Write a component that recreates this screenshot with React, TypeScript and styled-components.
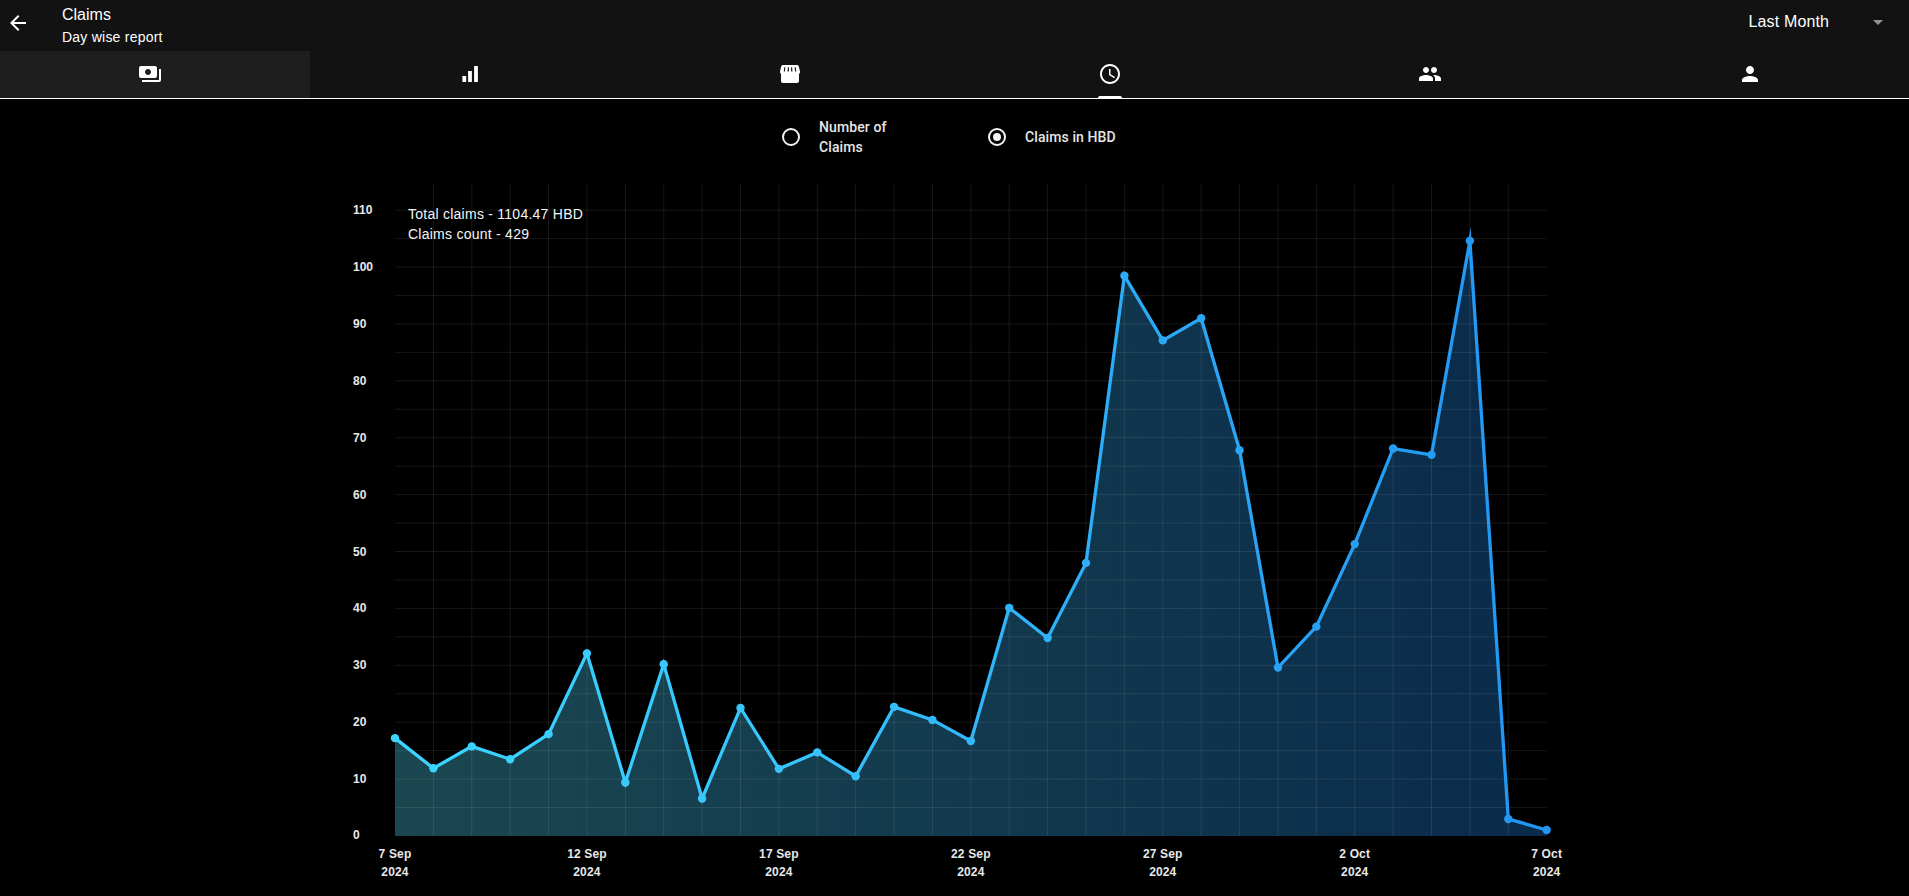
import React from "react";
import styled, { createGlobalStyle } from "styled-components";
import {
  MdArrowBack,
  MdArrowDropDown,
  MdPayments,
  MdAccessTime,
  MdPeople,
  MdPerson,
} from "react-icons/md";

const GlobalStyle = createGlobalStyle`
  html, body {
    margin: 0;
    padding: 0;
    height: 100%;
    background: #000;
    overflow: hidden;
    font-family: "Liberation Sans", Arial, sans-serif;
    color: #fff;
  }
`;

const Page = styled.div`
  width: 100%;
  height: 896px;
  background: #000;
  overflow: hidden;
`;

const Header = styled.header`
  background: #121212;
  border-bottom: 1px solid #fff;
  overflow: hidden;
`;

const TopRow = styled.div`
  display: flex;
  align-items: flex-start;
  height: 51px;
`;

const BackIcon = styled(MdArrowBack)`
  width: 24px;
  height: 24px;
  margin: 11px 32px 0 6px;
  color: #fff;
  flex: none;
`;

const Titles = styled.div`
  padding-top: 3px;
  flex: 1;
`;

const Title = styled.div`
  font-size: 16px;
  line-height: 24px;
`;

const Subtitle = styled.div`
  font-size: 14px;
  line-height: 20px;
  letter-spacing: 0.23px;
`;

const Select = styled.div`
  display: flex;
  align-items: center;
  height: 24px;
  margin: 10px 19px 0 0;
  font-size: 16px;
  letter-spacing: 0.15px;
`;

const SelectValue = styled.span`
  width: 117.5px;
`;

const SelectArrow = styled(MdArrowDropDown)`
  width: 24px;
  height: 24px;
  color: rgba(255, 255, 255, 0.54);
`;

const Tabs = styled.nav`
  display: flex;
  margin-left: -10px;
  height: 47px;
`;

const Tab = styled.div<{ $selected?: boolean }>`
  position: relative;
  flex: 0 0 320px;
  display: flex;
  justify-content: center;
  padding-top: 11px;
  box-sizing: border-box;
  color: #fff;
  background: ${(p) => (p.$selected ? "#1e1e1e" : "transparent")};
  svg {
    width: 24px;
    height: 24px;
  }
`;

const TabIndicator = styled.span`
  position: absolute;
  bottom: 0;
  left: 148px;
  width: 24px;
  height: 2px;
  background: #fff;
  border-radius: 2px 2px 0 0;
`;

const RadioRow = styled.div`
  display: flex;
  justify-content: center;
  align-items: center;
  gap: 78px;
  height: 71px;
  padding-top: 5px;
  box-sizing: border-box;
`;

const RadioItem = styled.label<{ $wide?: boolean }>`
  display: flex;
  align-items: center;
  gap: 19px;
  min-width: ${(p) => (p.$wide ? "139px" : "auto")};
`;

const RadioCircle = styled.span<{ $checked?: boolean }>`
  flex: none;
  display: flex;
  align-items: center;
  justify-content: center;
  width: 18px;
  height: 18px;
  box-sizing: border-box;
  border: 2px solid #f2f2f2;
  border-radius: 50%;
  &::after {
    content: "";
    display: ${(p) => (p.$checked ? "block" : "none")};
    width: 8px;
    height: 8px;
    border-radius: 50%;
    background: #f2f2f2;
  }
`;

const RadioLabel = styled.span<{ $narrow?: boolean }>`
  font-family: Roboto, "Liberation Sans", sans-serif;
  font-size: 14px;
  font-weight: 500;
  line-height: 20px;
  letter-spacing: 0.1px;
  color: #e6e6e6;
  width: ${(p) => (p.$narrow ? "91px" : "auto")};
`;

const ChartWrap = styled.section`
  position: relative;
  width: 1229px;
  height: 726px;
  margin: 0 auto;
`;

const ChartSvg = styled.svg`
  display: block;
  width: 1229px;
  height: 726px;
`;

const Stats = styled.div`
  position: absolute;
  left: 68px;
  top: 34px;
  font-size: 14px;
  line-height: 20px;
  letter-spacing: 0.25px;
  color: #f5f5f5;
`;

const YLabel = styled.text`
  font-family: "Liberation Sans", Arial, sans-serif;
  font-size: 12px;
  font-weight: 700;
  fill: #e8e8e8;
  dominant-baseline: central;
`;

const XLabel = styled.text`
  font-family: "Liberation Sans", Arial, sans-serif;
  font-size: 12px;
  font-weight: 700;
  letter-spacing: 0.15px;
  fill: #e8e8e8;
  text-anchor: middle;
`;

function StoreIcon() {
  return (
    <svg viewBox="0 0 24 24" fill="currentColor" fillRule="evenodd" xmlns="http://www.w3.org/2000/svg">
      <path d="M21.9 8.89l-1.05-4.37c-.22-.9-1-1.52-1.91-1.52H5.05c-.9 0-1.69.63-1.9 1.52L2.1 8.89c-.24 1.02-.02 2.06.62 2.88.08.11.19.19.28.29V19c0 1.1.9 2 2 2h14c1.1 0 2-.9 2-2v-6.94c.09-.09.2-.18.28-.28.64-.82.87-1.87.62-2.89z M6.3 5.2h1.1l-.55 4.4h-1.05z M9.9 5.2h1.05l-.1 4.4h-1.3z M13.05 5.2h1.05l.35 4.4h-1.3z M16.6 5.2h1.1l.5 4.4h-1.05z" />
    </svg>
  );
}

function BarsIcon() {
  return (
    <svg viewBox="0 0 24 24" fill="currentColor" xmlns="http://www.w3.org/2000/svg">
      <path d="M4.4 14h3.8v6H4.4z M10.1 9h3.8v11h-3.8z M16.1 4h3.8v16h-3.8z" />
    </svg>
  );
}

const values = [
  17.2, 11.9, 15.75, 13.5, 17.9, 32.1, 9.4, 30.2, 6.6, 22.5, 11.8, 14.7, 10.5, 22.7, 20.4,
  16.7, 40.1, 34.8, 48, 98.47, 87.1, 91, 67.8, 29.6, 36.8, 51.3, 68.1, 67, 104.6, 3, 1.05,
];

const X0 = 395;
const X1 = 1546.67;
const STEP = (X1 - X0) / 30;
const Y0 = 836;
const UNIT = 5.69;
const px = (i: number) => X0 + i * STEP;
const py = (v: number) => Y0 - v * UNIT;

const points = values.map((v, i) => [px(i), py(v)] as const);
const linePath = points.map(([x, y], i) => `${i ? "L" : "M"}${x.toFixed(2)} ${y.toFixed(2)}`).join(" ");
const areaPath = `${linePath} L${X1} ${Y0} L${X0} ${Y0} Z`;

const xTicks = [
  ["7 Sep", 0],
  ["12 Sep", 5],
  ["17 Sep", 10],
  ["22 Sep", 15],
  ["27 Sep", 20],
  ["2 Oct", 25],
  ["7 Oct", 30],
] as const;

const hLines = Array.from({ length: 22 }, (_, i) => (i + 1) * 5);
const vLines = Array.from({ length: 29 }, (_, i) => i + 1);
const yTicks = Array.from({ length: 12 }, (_, i) => i * 10);

function Chart() {
  return (
    <ChartSvg viewBox="340 170 1229 726" xmlns="http://www.w3.org/2000/svg">
      <defs>
        <linearGradient id="lineGrad" gradientUnits="userSpaceOnUse" x1={X0} y1="0" x2={X1} y2="0">
          <stop offset="0" stopColor="#3bd5ff" />
          <stop offset="0.35" stopColor="#36c4fd" />
          <stop offset="0.7" stopColor="#2aa6f6" />
          <stop offset="1" stopColor="#2196f3" />
        </linearGradient>
        <linearGradient id="fillGrad" gradientUnits="userSpaceOnUse" x1={X0} y1="0" x2={X1} y2="0">
          <stop offset="0" stopColor="#1a4750" />
          <stop offset="1" stopColor="#0a2b4b" />
        </linearGradient>
      </defs>
      <path d={areaPath} fill="url(#fillGrad)" />
      {hLines.map((v) => (
        <line key={v} x1={X0} x2={X1} y1={py(v)} y2={py(v)} stroke="rgba(255,255,255,0.09)" />
      ))}
      {vLines.map((i) => (
        <line key={i} x1={px(i)} x2={px(i)} y1={184} y2={Y0} stroke="rgba(255,255,255,0.09)" />
      ))}
      <path
        d={linePath}
        fill="none"
        stroke="url(#lineGrad)"
        strokeWidth={3.3}
        strokeLinejoin="miter"
        strokeMiterlimit={10}
      />
      {points.map(([x, y], i) => (
        <circle key={i} cx={x} cy={y} r={4.2} fill="url(#lineGrad)" />
      ))}
      {yTicks.map((v) => (
        <YLabel key={v} x={353} y={v === 0 ? 835 : py(v)}>
          {v}
        </YLabel>
      ))}
      {xTicks.map(([label, i]) => (
        <g key={label}>
          <XLabel x={px(i)} y={858}>
            {label}
          </XLabel>
          <XLabel x={px(i)} y={875.5}>
            2024
          </XLabel>
        </g>
      ))}
    </ChartSvg>
  );
}

export default function App() {
  return (
    <Page>
      <GlobalStyle />
      <Header>
        <TopRow>
          <BackIcon />
          <Titles>
            <Title>Claims</Title>
            <Subtitle>Day wise report</Subtitle>
          </Titles>
          <Select>
            <SelectValue>Last Month</SelectValue>
            <SelectArrow />
          </Select>
        </TopRow>
        <Tabs>
          <Tab $selected>
            <MdPayments />
          </Tab>
          <Tab>
            <BarsIcon />
          </Tab>
          <Tab>
            <StoreIcon />
          </Tab>
          <Tab>
            <MdAccessTime />
            <TabIndicator />
          </Tab>
          <Tab>
            <MdPeople />
          </Tab>
          <Tab>
            <MdPerson />
          </Tab>
        </Tabs>
      </Header>
      <RadioRow>
        <RadioItem>
          <RadioCircle />
          <RadioLabel $narrow>Number of Claims</RadioLabel>
        </RadioItem>
        <RadioItem $wide>
          <RadioCircle $checked />
          <RadioLabel>Claims in HBD</RadioLabel>
        </RadioItem>
      </RadioRow>
      <ChartWrap>
        <Chart />
        <Stats>
          Total claims - 1104.47 HBD
          <br />
          Claims count - 429
        </Stats>
      </ChartWrap>
    </Page>
  );
}
